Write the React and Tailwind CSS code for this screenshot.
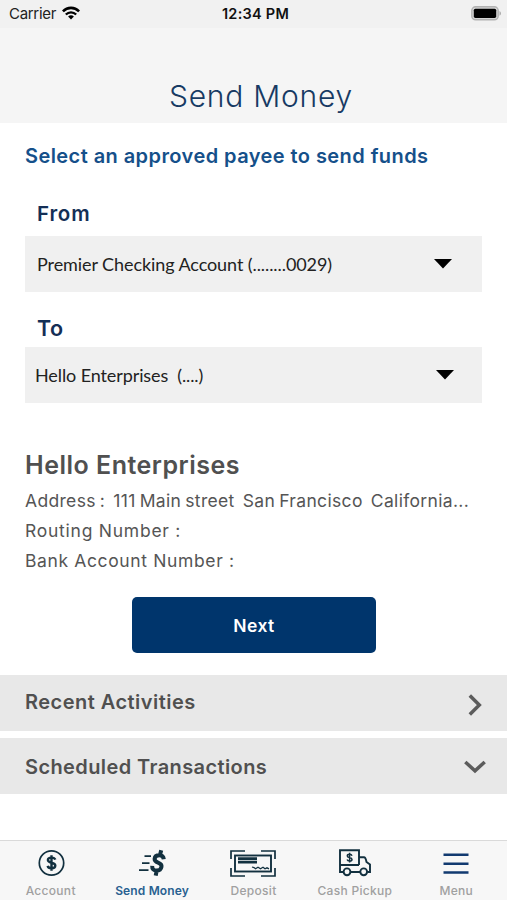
import React from 'react';

const WifiIcon = () => (
    <svg width="18" height="14" viewBox="0 0 18 14" fill="none" className="mb-[2px] ml-[6px]">
        <path d="M0.900 5.400C5.400.7 12.600.7 17.100 5.400" stroke="#000" strokeWidth="2.600" />
        <path d="M3.800 8.500C6.800 5.600 11.200 5.600 14.200 8.500" stroke="#000" strokeWidth="2.300" />
        <path d="M9 13.400L6.100 10.500C7.800 8.900 10.200 8.900 11.900 10.500Z" fill="#000" />
    </svg>
);

const BatteryIcon = () => (
    <svg width="31" height="15" viewBox="0 0 31 15" className="mb-[2px]">
        <rect x="0.800" y="0.800" width="26.400" height="13" rx="3.800" fill="#d5d5d5" stroke="#b2b2b2" strokeWidth="1.400" />
        <rect x="2.800" y="2.700" width="22.400" height="9.200" rx="1.600" fill="#000" />
        <path d="M28.500 5C30.500 6 30.500 8.800 28.500 9.800Z" fill="#a9a9a9" />
    </svg>
);

const StatusBar = () => (
    <div className="flex h-7 items-center bg-[#f1f1f1] pl-[9px] pr-[9px] text-[#111]">
        <div className="flex flex-1 items-center">
            <span className="text-[15px] leading-7 tracking-[-0.3px] text-[#222]">Carrier</span>
            <WifiIcon />
        </div>
        <span className="text-[14.500px] font-semibold leading-7 tracking-[0.25px]">12:34 PM</span>
        <div className="-mr-1 flex flex-1 justify-end">
            <BatteryIcon />
        </div>
    </div>
);

const Caret = () => (
    <svg width="20" height="10" viewBox="0 0 20 10">
        <path d="M1 0H19L10 9.500Z" fill="#000" />
    </svg>
);

const AccountIcon = () => (
    <svg width="28" height="28" viewBox="0 0 28 28" fill="none" stroke="#12303f">
        <circle cx="14.500" cy="14" r="12.200" strokeWidth="1.700" />
        <path d="M18.300 10.700C17.800 9.200 16.400 8.600 14.500 8.600C12.400 8.600 10.900 9.500 10.900 11.100C10.900 14.800 18.300 12.700 18.300 16.600C18.300 18.400 16.700 19.300 14.500 19.300C12.400 19.300 11 18.500 10.600 16.900M14.500 6.300V21.700" strokeWidth="2.400" />
    </svg>
);

const SendIcon = () => (
    <svg width="30" height="28" viewBox="0 0 30 28" fill="none" stroke="#12303f">
        <path d="M7.500 7.100H14M5 14.100H12.500M2 21.100H11.500" strokeWidth="1.900" />
        <path d="M26.800 10.200C26.500 7.300 24.700 6.300 22.300 6.300C19.800 6.300 17.800 7.600 17.600 9.900C17.200 14.700 25.300 12.500 24.500 17.700C24.100 20.300 22 21.600 19.400 21.600C16.700 21.600 15 20.100 15.200 16.900M24.200 1.200L23 6M19.700 21.500L18.700 26.700" strokeWidth="4" />
    </svg>
);

const DepositIcon = () => (
    <svg width="46" height="27" viewBox="0 0 46 27" fill="none" stroke="#12303f">
        <path d="M1 9V1H15M31 1H45V9M45 18V26H31M15 26H1V18" strokeWidth="1.700" />
        <rect x="5" y="5.500" width="36" height="16" strokeWidth="1.900" />
        <path d="M8 8.700H27M8 12.200H27" strokeWidth="2.700" />
        <path d="M22 17L24 17.600L25.500 18.800L28 17.300L30.500 18.800L33 17.300L35 18.800L37 17.800L39 18.800" strokeWidth="1.300" />
    </svg>
);

const TruckIcon = () => (
    <svg width="34" height="28" viewBox="0 0 34 28" fill="none" stroke="#12303f" strokeWidth="1.900">
        <path d="M5.500 23H2V1.300H21V16M2 16H21M21 8.300H26C27.500 8.300 28 10.500 28.500 13L32 15.500V23H29.500M12 23H22.500" />
        <circle cx="9" cy="22.800" r="3.400" />
        <circle cx="25.700" cy="22.800" r="3.400" />
        <path d="M14 6.700C13.600 5.700 12.700 5.300 11.600 5.300C10.300 5.300 9.300 5.900 9.300 6.900C9.300 9.100 14 7.900 14 10.400C14 11.500 12.900 12.100 11.600 12.100C10.300 12.100 9.400 11.600 9.100 10.500M11.600 3.800V13.600" strokeWidth="1.500" />
    </svg>
);

const MenuIcon = () => (
    <svg width="26" height="22" viewBox="0 0 26 22" stroke="#123a70" strokeWidth="2.500" className="mt-[2px]">
        <path d="M0.500 1.700H25.500M0.500 10.700H25.500M0.500 19.500H25.500" />
    </svg>
);

const tabs = [
    { label: 'Account', Icon: AccountIcon },
    { label: 'Send Money', Icon: SendIcon, active: true },
    { label: 'Deposit', Icon: DepositIcon },
    { label: 'Cash Pickup', Icon: TruckIcon },
    { label: 'Menu', Icon: MenuIcon },
];

const TabBar = () => (
    <nav className="grid h-[60px] grid-cols-5 border-t border-[#dadada] bg-[#f7f7f7]">
        {tabs.map(({ label, Icon, active }) => (
            <div key={label} className="flex flex-col items-center pt-2">
                <div className="flex h-7 items-center">
                    <Icon />
                </div>
                <span
                    className={
                        active
                            ? 'mt-[6px] whitespace-nowrap text-[12px] font-semibold leading-4 tracking-[0.15px] text-[#286090]'
                            : 'mt-[6px] whitespace-nowrap text-[12px] font-medium leading-4 tracking-[0.3px] text-[#a0a0a0]'
                    }
                >
                    {label}
                </span>
            </div>
        ))}
    </nav>
);

const App = () => {
    return (
        <div className="flex h-[900px] w-[507px] flex-col overflow-hidden bg-white font-['Inter',sans-serif]">
            <StatusBar />
            <header className="flex h-[95px] items-end justify-center bg-[#f5f5f5] pb-[9px] pl-[15px]">
                <h1 className="text-[30px] font-light leading-9 tracking-[0.75px] text-[#173a63]">Send Money</h1>
            </header>

            <main className="flex-1">
                <div className="px-[25px]">
                    <h2 className="whitespace-nowrap pt-[21px] text-[20px] font-semibold leading-6 tracking-[0.43px] text-[#15508a]">
                        Select an approved payee to send funds
                    </h2>

                    <div className="pl-3 pt-[34px] text-[20.500px] font-semibold leading-6 tracking-[0.8px] text-[#142f56]">From</div>
                    <div className="mt-[10px] flex h-14 items-center justify-between bg-[#f0f0f0] pl-[12px] pr-[29px] font-['Lato',sans-serif] text-[18px] text-[#222]">
                        <span className="tracking-[-0.08px]">Premier Checking Account (........0029)</span>
                        <Caret />
                    </div>

                    <div className="pl-3 pt-[24px] text-[21.500px] font-semibold leading-6 tracking-[0.5px] text-[#142f56]">To</div>
                    <div className="mt-[7px] flex h-14 items-center justify-between bg-[#f0f0f0] pl-[10px] pr-[27px] font-['Lato',sans-serif] text-[18px] text-[#222]">
                        <span className="whitespace-pre tracking-[-0.1px]">Hello Enterprises  (....)</span>
                        <Caret />
                    </div>

                    <h3 className="pt-[47px] text-[25px] font-semibold leading-[30px] tracking-[0.5px] text-[#505050]">Hello Enterprises</h3>
                    <p className="whitespace-pre pt-[9px] text-[17.500px] leading-6 tracking-[0.33px] [word-spacing:-1.200px] text-[#555]">Address :  111 Main street  San Francisco  California...</p>
                    <p className="pt-[6px] text-[17.500px] leading-6 tracking-[0.75px] text-[#555]">Routing Number :</p>
                    <p className="pt-[6px] text-[17.500px] leading-6 tracking-[0.63px] text-[#555]">Bank Account Number :</p>

                    <button className="ml-[107px] mt-6 block h-14 w-[244px] rounded-[5px] bg-[#00356c] pt-[2px] text-[17.500px] font-semibold tracking-[0.45px] text-white">
                        Next
                    </button>
                </div>

                <div className="mt-[22px] flex h-14 items-center justify-between bg-[#e8e8e8] pl-[25px] pr-[25px]">
                    <span className="pb-[2px] text-[20px] font-semibold tracking-[0.47px] text-[#505050]">Recent Activities</span>
                    <svg width="14" height="22" viewBox="0 0 14 22" fill="none" stroke="#5c5c5c" strokeWidth="3.500" className="mt-[3px]">
                        <path d="M1.800 1.500L11.300 11L1.800 20.500" />
                    </svg>
                </div>
                <div className="mt-[7px] flex h-14 items-center justify-between bg-[#e8e8e8] pl-[25px] pr-[21px] pt-[2px]">
                    <span className="text-[20px] font-semibold tracking-[0.4px] text-[#505050]">Scheduled Transactions</span>
                    <svg width="22" height="14" viewBox="0 0 22 14" fill="none" stroke="#5c5c5c" strokeWidth="3.500">
                        <path d="M1.300 2L11 10.800L20.700 2" />
                    </svg>
                </div>
            </main>

            <TabBar />
        </div>
    );
};

export default App;
